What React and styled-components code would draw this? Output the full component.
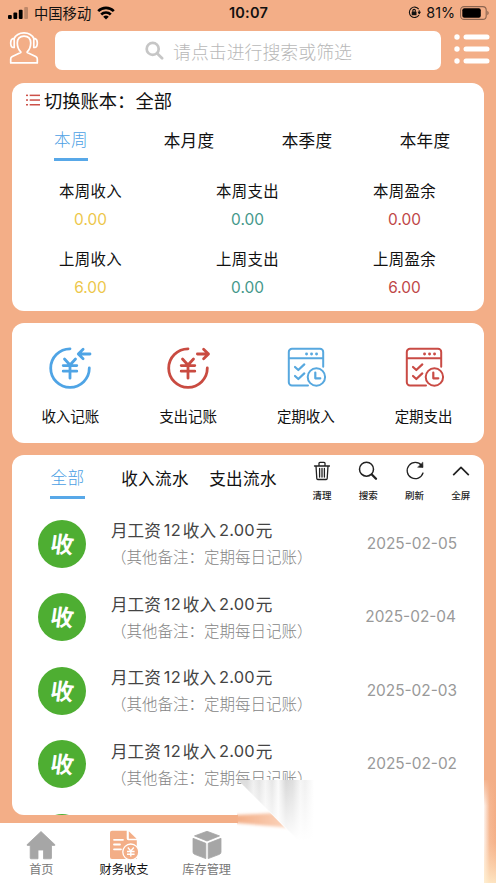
import React from "react";
import styled, { createGlobalStyle } from "styled-components";

const GlobalStyle = createGlobalStyle`
  * { box-sizing: border-box; }
  body {
    margin: 0;
    background: #f3ae87;
    font-family: Inter, "Noto Sans CJK SC", sans-serif;
    color: #111;
  }
`;

const cjk = `"Noto Sans CJK SC", sans-serif`;

const Screen = styled.div`
  position: relative;
  width: 496px;
  height: 883px;
  overflow: hidden;
  display: flex;
  flex-direction: column;
  background: #f3ae87;
`;

const StatusBar = styled.header`
  height: 25px;
  flex: none;
  display: grid;
  grid-template-columns: 1fr auto 1fr;
  align-items: center;
  padding: 0 7px 0 8px;
`;

const StatusGroup = styled.div`
  display: flex;
  align-items: center;
  gap: ${(p) => p.$gap}px;
  justify-content: ${(p) => (p.$end ? "flex-end" : "flex-start")};
`;

const Carrier = styled.span`
  font: 400 14.3px/20px ${cjk};
  margin-right: 1px;
`;

const Clock = styled.span`
  font-size: 14.5px;
  font-weight: 600;
  line-height: 20px;
  letter-spacing: 0.2px;
`;

const Percent = styled.span`
  font-size: 14.3px;
  line-height: 20px;
`;

const TopBar = styled.div`
  height: 58px;
  flex: none;
  display: flex;
  align-items: flex-start;
  padding: 6px 6px 0 8px;
`;

const IconButton = styled.button`
  display: flex;
  padding: 0;
  border: 0;
  background: none;
  margin-top: ${(p) => p.$top || 0}px;
`;

const SearchField = styled.div`
  width: 386px;
  height: 39px;
  margin: 0 13px 0 15px;
  display: flex;
  align-items: center;
  gap: 9px;
  padding-left: 90px;
  border-radius: 7px;
  background: #fff;
  color: #b8b8b8;
  font: 300 17.9px/38px ${cjk};
`;

const Card = styled.section`
  flex: none;
  width: 472px;
  height: ${(p) => p.$height}px;
  margin: 0 12px ${(p) => p.$gap}px;
  overflow: hidden;
  border-radius: 12px;
  background: #fff;
`;

const BookSwitch = styled.div`
  display: flex;
  align-items: center;
  gap: 4px;
  height: 34px;
  padding-left: 14px;
  font: 400 18.3px/34px ${cjk};
`;

const PeriodTabs = styled.nav`
  display: grid;
  grid-template-columns: repeat(4, 1fr);
  justify-items: center;
  height: 58px;
`;

const Tab = styled.button`
  display: flex;
  justify-content: center;
  align-items: flex-start;
  height: 44px;
  padding: ${(p) => (p.$active ? 10 : 11)}px 0 0;
  border: 0;
  border-bottom: 3px solid ${(p) => (p.$active ? "#58a8e8" : "transparent")};
  background: none;
  color: ${(p) => (p.$active ? "#4ba0e4" : "#111")};
  font: ${(p) => (p.$active ? 300 : 400)} 16.6px/24px ${cjk};
  letter-spacing: 0.3px;
  white-space: nowrap;
`;

const StatGrid = styled.div`
  display: grid;
  grid-template-columns: repeat(3, 1fr);
  row-gap: 12px;
  padding: 3px 1px 0 0;
`;

const Stat = styled.div`
  height: 56px;
  text-align: center;
`;

const StatLabel = styled.div`
  font: 400 15.4px/24px ${cjk};
  letter-spacing: 0.3px;
`;

const StatValue = styled.div`
  font-size: 15.4px;
  line-height: 24px;
  padding-top: 6px;
  color: ${(p) => p.$color};
`;

const ActionGrid = styled.div`
  display: grid;
  grid-template-columns: repeat(4, 1fr);
  padding: 22px 1px 0 0;
`;

const Action = styled.button`
  display: flex;
  flex-direction: column;
  align-items: center;
  gap: 13px;
  padding: 0 1px 0 0;
  border: 0;
  background: none;
  color: #111;
  font: 400 14.5px/24px ${cjk};
`;

const LedgerHeader = styled.div`
  display: flex;
  height: 52px;
  padding-left: 38px;
`;

const LedgerTabs = styled.nav`
  display: flex;
  width: 249px;
  height: 44px;
`;

const LedgerTab = styled(Tab)`
  width: ${(p) => p.$width}px;
  margin-right: ${(p) => p.$gap}px;
  flex: none;
`;

const Tools = styled.div`
  display: grid;
  grid-template-columns: repeat(4, 46.3px);
`;

const Tool = styled.button`
  display: flex;
  flex-direction: column;
  align-items: center;
  gap: 6px;
  padding: 5px 0 0;
  border: 0;
  background: none;
  color: #222;
  font: 500 9.5px/15px ${cjk};
`;

const Entry = styled.article`
  display: grid;
  grid-template-columns: 48px 1fr auto;
  align-items: center;
  height: 73.5px;
  padding: 0 27px 0 26px;
`;

const Badge = styled.div`
  width: 48px;
  height: 48px;
  border-radius: 50%;
  background: #4eae32;
  color: #fff;
  text-align: center;
  font: 700 23px/46px ${cjk};
`;

const BadgeText = styled.span`
  display: inline-block;
  transform: skewY(5deg) skewX(-8deg);
`;

const EntryText = styled.div`
  padding-left: 25px;
`;

const EntryTitle = styled.div`
  display: flex;
  color: #444;
  font: 400 16.6px/26px ${cjk};
`;

const Digits = styled.span`
  margin: 0 ${(p) => p.$after}px 0 3px;
  font-family: Inter, sans-serif;
  font-size: 16.4px;
  letter-spacing: 0.2px;
`;

const EntryNote = styled.div`
  color: #858585;
  font: 300 15.5px/27px ${cjk};
  white-space: nowrap;
`;

const EntryDate = styled.time`
  color: #999;
  font-size: 15.4px;
  line-height: 24px;
  margin-right: ${(p) => p.$shift}px;
`;

const BottomNav = styled.nav`
  flex: none;
  display: grid;
  grid-template-columns: repeat(6, 1fr);
  height: 60px;
  background: #fff;
`;

const NavItem = styled.button`
  display: flex;
  flex-direction: column;
  align-items: center;
  gap: 0;
  padding: 7px 0 0;
  border: 0;
  background: none;
  color: ${(p) => (p.$active ? "#111" : "#777")};
  font: 400 12.2px/18px ${cjk};
`;

/* Faded corner lying over the ledger and navigation */
const CornerFade = styled.svg`
  position: absolute;
  left: 0;
  top: 780px;
  pointer-events: none;
`;

const Line = ({ children, size = 24, width, height, color = "currentColor", box, stroke = 2 }) => (
  <svg
    width={width || size}
    height={height || size}
    viewBox={box || `0 0 ${size} ${size}`}
    fill="none"
    stroke={color}
    strokeWidth={stroke}
    strokeLinecap="round"
    strokeLinejoin="round"
  >
    {children}
  </svg>
);

const Signal = () => (
  <svg width="21" height="12" viewBox="0 0 21 12">
    <rect x="0" y="8" width="3.8" height="4" rx="1" />
    <rect x="5.4" y="5.5" width="3.8" height="6.5" rx="1" />
    <rect x="10.8" y="2.7" width="3.8" height="9.3" rx="1" />
    <rect x="16.2" y="0" width="3.8" height="12" rx="1" opacity=".22" />
  </svg>
);

const Wifi = () => (
  <svg width="18" height="14" viewBox="0 0 18 14" fill="none" stroke="#000" strokeWidth="2.7">
    <path d="M1.2 5.1a11.2 11.2 0 0 1 15.6 0M4.2 8.4a7 7 0 0 1 9.6 0" />
    <path d="M9 13.5 6.2 10.8a4 4 0 0 1 5.6 0Z" fill="#000" stroke="none" />
  </svg>
);

const RotationLock = () => (
  <svg width="13" height="13" viewBox="0 0 13 13" fill="none" stroke="#111" strokeWidth="1.1">
    <path d="M10.7 3.1A5.2 5.2 0 1 0 11 9M11.2 4.2v3.6" />
    <path d="m9.5 5.8 1.8 2.7 1.7-2.7Z" fill="#111" stroke="none" />
    <rect x="3.7" y="5.6" width="4.8" height="3.7" rx=".5" fill="#111" stroke="none" />
    <path d="M4.800 5.800V4.700a1.300 1.300 0 0 1 2.600 0v1.100" />
  </svg>
);

const Battery = () => (
  <svg width="29" height="14" viewBox="0 0 29 14">
    <rect x=".6" y=".6" width="25.6" height="12.8" rx="3.5" fill="none" stroke="#8c6550" strokeWidth="1.1" />
    <rect x="2.3" y="2.3" width="18.5" height="9.4" rx="2" />
    <path d="M27.300 4.800c1.800.8 1.800 3.600 0 4.400Z" fill="#8c6550" />
  </svg>
);

const Agent = () => (
  <Line width={32} height={34} box="0 0 32 34" color="#fff" stroke={1.7}>
    <path d="M6.2 16.5H5C3 16 2.700 14.500 2.700 11.900S3.200 8 5 7.500h1.200ZM25.800 16.500H27c2-.5 2.300-2 2.300-4.600S28.800 8 27 7.500h-1.200Z" />
    <path d="M6 7.800C7.800 3.800 11.200 1.800 16 1.800s8.200 2 10 6" />
    <path d="M12.800 20.800C10.500 18.700 9.300 15.500 9.300 12c0-4.500 2.500-6.900 6.700-6.900s6.700 2.400 6.700 6.900c0 3.500-1.200 6.700-3.500 8.800v.8l8.500 4q1.600.8 1.600 2.400v3.900H2.700V28q0-1.600 1.600-2.400l8.500-4Z" />
  </Line>
);

const MenuList = () => (
  <svg width="36" height="32" viewBox="0 0 36 32" fill="#fff">
    {[4, 16, 28].map((y) => (
      <g key={y}>
        <circle cx="3" cy={y} r="2.7" />
        <rect x="9.5" y={y - 2.5} width="26" height="5" rx="2.5" />
      </g>
    ))}
  </svg>
);

const SearchGlyph = () => (
  <Line size={19} color="#c6c6c6" stroke={2.7}>
    <circle cx="7.7" cy="7.9" r="6" />
    <path d="m12.5 12.7 4.6 4.6" />
  </Line>
);

const BookIcon = () => (
  <svg width="14" height="12" viewBox="0 0 14 12" fill="#cc5149">
    {[0.6, 5.3, 10].map((y) => (
      <g key={y}>
        <rect x="0" y={y} width="2" height="1.5" />
        <rect x="3.7" y={y} width="10.3" height="1.5" />
      </g>
    ))}
  </svg>
);

const MoneyCircle = ({ color, out }) => (
  <Line size={46} color={color} stroke={2.8}>
    <path d="M23 3.800A19.300 19.300 0 1 0 42.300 23" />
    {out ? <path d="M32.400 9h11M38.600 4.200 43.500 9l-4.900 4.800" /> : <path d="M43 9H31.500m4.600-4.800L31.300 9l4.800 4.800" />}
    <path d="m17.500 14 5.500 6 5.500-6M16.200 20.600h13.600M16.200 26.200h13.600M23 20.500v12.700" />
  </Line>
);

const Schedule = ({ color }) => (
  <Line size={46} color={color} box="-1 0 46 46" stroke={2}>
    <path d="M24 40.400H8a3.200 3.200 0 0 1-3.200-3.200V7A3.200 3.200 0 0 1 8 3.800h28A3.200 3.200 0 0 1 39.200 7v14.700M5 13.300h34" />
    <path d="m11 22 3.300 3 6-5.600M11 31l3.300 3 6-5.600" strokeWidth="2.2" />
    <circle cx="32.4" cy="32" r="8.7" />
    <path d="M31.300 27.500v5.800h5" strokeWidth="2.2" />
    <path d="M22.500 9h.1M27.500 9h.1M32.500 9h.1" strokeWidth="2.8" />
  </Line>
);

const Trash = () => (
  <Line size={22} stroke={1.3}>
    <path d="M3.500 6h15M8 5.800V3.300q0-1 1-1h4q1 0 1 1v2.500M5 6l.8 12.500q.1 1 1 1h8.400q.9 0 1-1L17 6M8.600 8.500v8.600M11 8.500v8.600M13.400 8.500v8.600" />
  </Line>
);

const Magnifier = () => (
  <Line size={22} stroke={1.5}>
    <circle cx="9.5" cy="9.2" r="7" />
    <path d="m14.800 14.500 4.200 4.200" strokeWidth="2.3" />
  </Line>
);

const Refresh = () => (
  <Line size={22} stroke={1.3}>
    <path d="M17.600 5.500A8.100 8.100 0 1 0 19 13" />
    <path d="m18.800 2.500.2 5-5-.3Z" fill="currentColor" strokeWidth=".6" />
  </Line>
);

const Chevron = () => (
  <Line size={22} stroke={1.7}>
    <path d="m3.200 15.200 7.800-7.800 7.800 7.800" strokeLinecap="butt" />
  </Line>
);

const HomeIcon = () => (
  <svg width="30" height="30" viewBox="0 0 30 30" fill="#a6a6a6" stroke="#a6a6a6" strokeLinejoin="round">
    <path d="M15 1.500 1.200 14.500q-.7.900.5.900h2.500V28q0 .8.800.8H12V20h5.500v8.800h7.200q.8 0 .8-.8V15.400h2.800q1.200 0 .5-.9Z" strokeWidth=".8" />
  </svg>
);

const FinanceIcon = () => (
  <svg width="30" height="30" viewBox="0 0 30 30">
    <path d="M3 .8h14.700v7.800q0 1.700 1.700 1.700h8.400V29H3q-2 0-2-2V2.800q0-2 2-2Z" fill="#f3ae87" />
    <path d="M19.800 1.200 27.600 8.700h-7.800Z" fill="#f3ae87" />
    <path d="M5 9.800h9M5 14.500h6M5 19.300h7" stroke="#fff" strokeWidth="1.8" strokeLinecap="round" />
    <circle cx="21.8" cy="22" r="8" fill="#f3ae87" stroke="#fff" strokeWidth="1.3" />
    <path d="m18.800 17.500 3 3.500 3-3.500M18 21.500h7.600M18 24.200h7.600M21.800 21.500v5" fill="none" stroke="#fff" strokeWidth="1.4" />
  </svg>
);

const BoxIcon = () => (
  <svg width="30" height="30" viewBox="0 0 30 30" fill="#a6a6a6" stroke="#a6a6a6" strokeWidth=".8" strokeLinejoin="round">
    <path d="m15 1.300 12.500 4.600L15 11 2.500 5.900Z" />
    <path d="m1 8.300 12.800 5v15.300L2.500 24.300Q1 23.700 1 22Z" />
    <path d="m29 8.300-12.800 5v15.300l11.300-4.300Q29 23.700 29 22Z" />
  </svg>
);

const stats = [
  ["本周收入", "0.00", "#edc74b"],
  ["本周支出", "0.00", "#45988b"],
  ["本周盈余", "0.00", "#c04747"],
  ["上周收入", "6.00", "#edc74b"],
  ["上周支出", "0.00", "#45988b"],
  ["上周盈余", "6.00", "#c04747"],
];

const actions = [
  ["收入记账", <MoneyCircle color="#4fa4e5" />],
  ["支出记账", <MoneyCircle color="#c94b41" out />],
  ["定期收入", <Schedule color="#57a8df" />],
  ["定期支出", <Schedule color="#c94b45" />],
];

const tools = [["清理", <Trash />], ["搜索", <Magnifier />], ["刷新", <Refresh />], ["全屏", <Chevron />]];

const entries = [
  ["2025-02-05", 0],
  ["2025-02-04", 1],
  ["2025-02-03", 0],
  ["2025-02-02", 0],
];

export default function App() {
  return (
    <Screen>
      <GlobalStyle />
      <StatusBar>
        <StatusGroup $gap={5}>
          <Signal />
          <Carrier>中国移动</Carrier>
          <Wifi />
        </StatusGroup>
        <Clock>10:07</Clock>
        <StatusGroup $gap={5} $end>
          <RotationLock />
          <Percent>81%</Percent>
          <Battery />
        </StatusGroup>
      </StatusBar>

      <TopBar>
        <IconButton aria-label="客服"><Agent /></IconButton>
        <SearchField>
          <SearchGlyph />
          <span>请点击进行搜索或筛选</span>
        </SearchField>
        <IconButton aria-label="菜单" $top={2}><MenuList /></IconButton>
      </TopBar>

      <Card $height={228} $gap={12}>
        <BookSwitch><BookIcon />切换账本：全部</BookSwitch>
        <PeriodTabs>
          {["本周", "本月度", "本季度", "本年度"].map((name, i) => (
            <Tab key={name} $active={i === 0}>{name}</Tab>
          ))}
        </PeriodTabs>
        <StatGrid>
          {stats.map(([label, value, color]) => (
            <Stat key={label}>
              <StatLabel>{label}</StatLabel>
              <StatValue $color={color}>{value}</StatValue>
            </Stat>
          ))}
        </StatGrid>
      </Card>

      <Card $height={120} $gap={12}>
        <ActionGrid>
          {actions.map(([label, icon]) => (
            <Action key={label}>{icon}{label}</Action>
          ))}
        </ActionGrid>
      </Card>

      <Card $height={360} $gap={8}>
        <LedgerHeader>
          <LedgerTabs>
            <LedgerTab $active $width={35} $gap={36}>全部</LedgerTab>
            <LedgerTab $width={68} $gap={20}>收入流水</LedgerTab>
            <LedgerTab $width={68} $gap={0}>支出流水</LedgerTab>
          </LedgerTabs>
          <Tools>
            {tools.map(([label, icon]) => <Tool key={label}>{icon}{label}</Tool>)}
          </Tools>
        </LedgerHeader>
        {entries.map(([date, shift]) => (
          <Entry key={date}>
            <Badge><BadgeText>收</BadgeText></Badge>
            <EntryText>
              <EntryTitle>
                月工资<Digits $after={2}>12</Digits>收入<Digits $after={1}>2.00</Digits>元
              </EntryTitle>
              <EntryNote>（其他备注：定期每日记账）</EntryNote>
            </EntryText>
            <EntryDate $shift={shift}>{date}</EntryDate>
          </Entry>
        ))}
        <Entry><Badge /></Entry>
      </Card>

      <BottomNav>
        <NavItem><HomeIcon />首页</NavItem>
        <NavItem $active><FinanceIcon />财务收支</NavItem>
        <NavItem><BoxIcon />库存管理</NavItem>
      </BottomNav>

      <CornerFade width="496" height="103" viewBox="0 0 496 103">
        <defs>
          <linearGradient id="streaks" x1="238" x2="314" y1="0" y2="0" gradientUnits="userSpaceOnUse">
            <stop offset="0" stopColor="#ddd" />
            <stop offset=".12" stopColor="#dcdcdc" />
            <stop offset=".2" stopColor="#f0f0f0" />
            <stop offset=".28" stopColor="#e4e4e4" />
            <stop offset=".36" stopColor="#f5f5f5" />
            <stop offset=".45" stopColor="#e6e6e6" />
            <stop offset=".53" stopColor="#fafafa" />
            <stop offset=".63" stopColor="#d8d8d8" />
            <stop offset=".72" stopColor="#dedede" />
            <stop offset=".82" stopColor="#f6f6f6" />
            <stop offset=".88" stopColor="#f0f0f0" />
            <stop offset="1" stopColor="#fff" />
          </linearGradient>
          <linearGradient id="fall" x1="0" x2="0" y1="0" y2="1">
            <stop offset="0" stopColor="#fff" stopOpacity="0" />
            <stop offset=".3" stopColor="#fff" stopOpacity=".3" />
            <stop offset="1" stopColor="#fff" />
          </linearGradient>
          <linearGradient id="bandFade" x1="236" x2="286" y1="0" y2="0" gradientUnits="userSpaceOnUse">
            <stop offset="0" stopColor="#f3ae87" />
            <stop offset="1" stopColor="#fbd3bb" />
          </linearGradient>
          <linearGradient id="edge" x1="483" x2="496" y1="0" y2="0" gradientUnits="userSpaceOnUse">
            <stop offset="0" stopColor="#fff" />
            <stop offset=".5" stopColor="#f6b893" />
            <stop offset="1" stopColor="#f4ad85" />
          </linearGradient>
          <linearGradient id="edgeFall" x1="0" x2="0" y1="0" y2="1">
            <stop offset="0" stopColor="#f3ae87" stopOpacity=".9" />
            <stop offset=".25" stopColor="#f3ae87" stopOpacity="0" />
            <stop offset=".6" stopColor="#ffd9b3" stopOpacity=".1" />
            <stop offset="1" stopColor="#ffedcb" stopOpacity=".85" />
          </linearGradient>
          <filter id="soft" x="-20%" y="-50%" width="140%" height="200%">
            <feGaussianBlur stdDeviation="0.1 1.6" />
          </filter>
        </defs>
        <path d="M238 34H340V50H238Z" fill="#fff" />
        <path d="M237 35 292 32v16l-55-5Z" fill="url(#bandFade)" filter="url(#soft)" />
        <path d="M238 0H484V103H340L297 60Z" fill="#fff" />
        <path d="M238 0H314V60H298Z" fill="url(#streaks)" />
        <path d="M238 0H315V61H298Z" fill="url(#fall)" />
        <path d="M484 0H496V103H484Z" fill="url(#edge)" />
        <path d="M484 0H496V103H484Z" fill="url(#edgeFall)" />
      </CornerFade>
    </Screen>
  );
}
